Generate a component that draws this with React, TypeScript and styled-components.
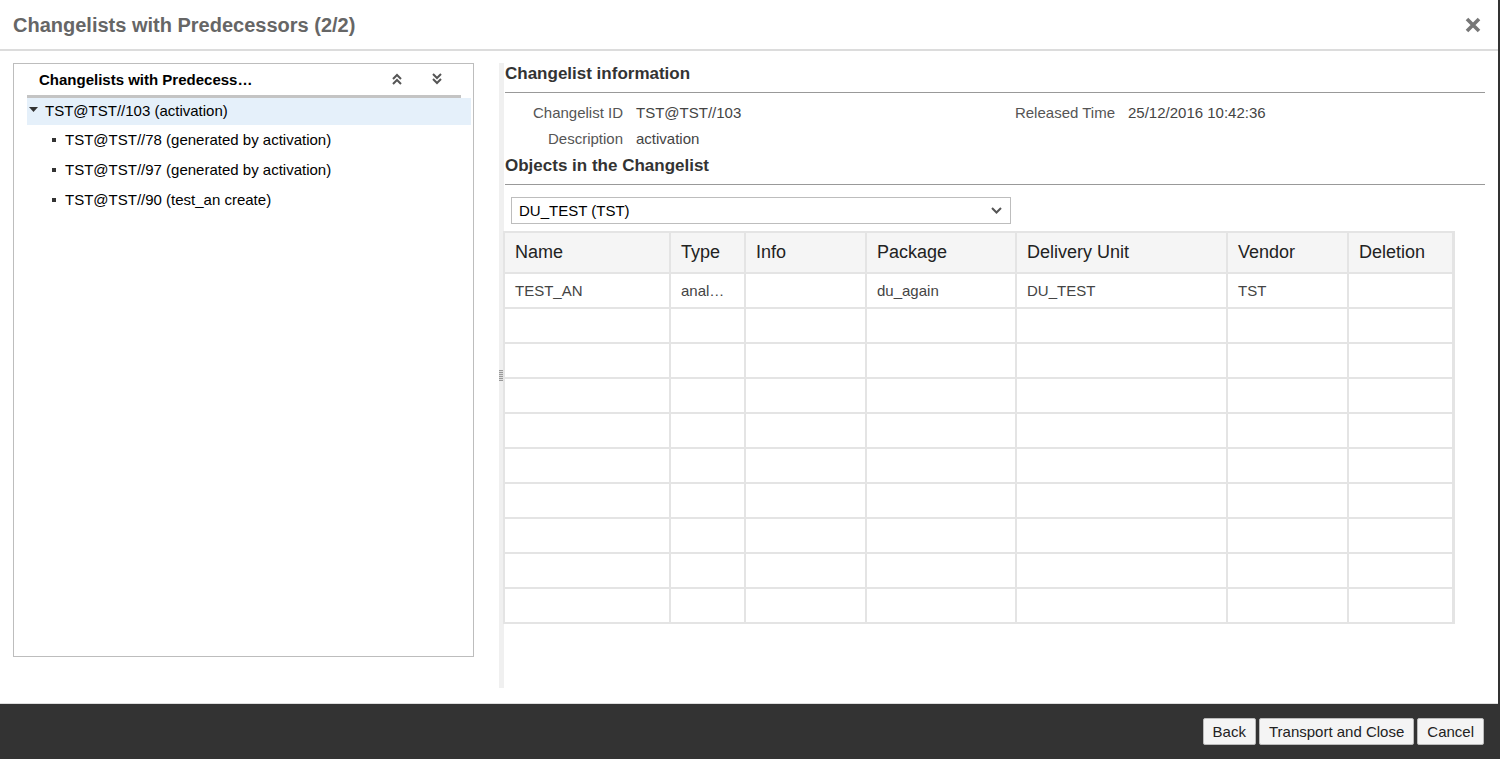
import React from "react";
import styled, { createGlobalStyle } from "styled-components";

const Global = createGlobalStyle`
  html, body { margin: 0; padding: 0; background: #fff; }
  body { font-family: "Liberation Sans", Arial, sans-serif; color: #333; }
  * { box-sizing: border-box; }
`;

const Dialog = styled.div`
  width: 1500px;
  height: 759px;
  display: flex;
  flex-direction: column;
  border-right: 2px solid #333;
  background: #fff;
`;

const Header = styled.div`
  height: 51px;
  flex: none;
  display: flex;
  align-items: center;
  justify-content: space-between;
  padding: 1px 16px 0 13px;
  border-bottom: 2px solid #dcdcdc;
`;

const Title = styled.h1`
  margin: 0;
  font-size: 20px;
  font-weight: bold;
  color: #666;
`;

const Close = styled.div`
  width: 18px;
  height: 18px;
  display: flex;
  align-items: center;
  justify-content: center;
`;

const Body = styled.div`
  flex: 1;
  display: flex;
  padding: 12px 13px 15px 13px;
  min-height: 0;
`;

const LeftPanel = styled.div`
  width: 461px;
  height: 594px;
  border: 1px solid #bdbdbd;
  padding: 0 2px 0 13px;
  flex: none;
`;

const TreeHead = styled.div`
  height: 34px;
  display: flex;
  align-items: center;
  padding: 0 16px 1px 12px;
  border-bottom: 3px solid #c4c4c4;
  margin-right: 10px;
`;

const TreeTitle = styled.div`
  flex: 1;
  font-size: 15px;
  font-weight: bold;
  color: #000;
`;

const IconBtn = styled.div`
  width: 16px;
  height: 16px;
  margin-left: 24px;
  display: flex;
  align-items: center;
  justify-content: center;
`;

const Row = styled.div<{ $selected?: boolean; $level: number }>`
  height: ${(p) => (p.$selected ? 27 : 30)}px;
  display: flex;
  align-items: center;
  padding-left: ${(p) => (p.$level === 0 ? 2 : 23)}px;
  background: ${(p) => (p.$selected ? "#e5f0fa" : "transparent")};
  font-size: 15px;
  color: #000;
  padding-bottom: ${(p) => (p.$selected ? 3 : 1)}px;
`;

const Twisty = styled.span`
  width: 16px;
  display: flex;
  align-items: center;
`;

const Bullet = styled.span`
  width: 4px;
  height: 4px;
  background: #333;
  margin: 0 9px 0 2px;
`;

const Splitter = styled.div`
  width: 5px;
  height: 625px;
  margin-left: 25px;
  background: #f0f0f0;
  flex: none;
  display: flex;
  align-items: center;
  justify-content: center;
`;

const Grip = styled.div`
  width: 5px;
  height: 11px;
  background: repeating-linear-gradient(#999 0 1px, #ddd 1px 2px);
`;

const RightPanel = styled.div`
  flex: 1;
  padding-left: 1px;
  display: flex;
  flex-direction: column;
`;

const SectionTitle = styled.h2`
  margin: 0;
  font-size: 17px;
  font-weight: bold;
  color: #333;
  height: 30px;
  line-height: 22px;
  border-bottom: 1px solid #999;
`;

const InfoGrid = styled.div`
  display: grid;
  grid-template-columns: 118px 354px 112px 1fr;
  grid-auto-rows: 26px;
  align-items: center;
  column-gap: 13px;
  padding: 6px 0 4px;
  font-size: 15px;
`;

const Label = styled.div`
  text-align: right;
  color: #555;
`;

const Value = styled.div`
  color: #444;
`;

const SelectBox = styled.div`
  margin: 12px 0 7px 6px;
  width: 500px;
  height: 27px;
  border: 1px solid #bdbdbd;
  display: flex;
  align-items: center;
  justify-content: space-between;
  padding: 0 8px 0 7px;
  font-size: 15px;
  color: #000;
`;

const TableWrap = styled.div`
  width: 952px;
  margin-left: -2px;
  border-right: 3px solid #e4e4e4;
`;

const Table = styled.table`
  border-collapse: collapse;
  table-layout: fixed;
  width: 949px;
  font-size: 15px;
`;

const Th = styled.th<{ $w: number }>`
  width: ${(p) => p.$w}px;
  height: 41px;
  background: #f5f5f5;
  border: 2px solid #e4e4e4;
  text-align: left;
  font-weight: normal;
  font-size: 18px;
  color: #222;
  padding: 0 10px 1px;
`;

const Td = styled.td`
  height: 35px;
  border: 2px solid #e4e4e4;
  padding: 0 16px 1px 10px;
  color: #444;
  white-space: nowrap;
  overflow: hidden;
  text-overflow: ellipsis;
`;

const Footer = styled.div`
  height: 56px;
  flex: none;
  background: #333;
  border-top: 1px solid #ddd;
  display: flex;
  align-items: center;
  justify-content: flex-end;
  gap: 3px;
  padding: 0 14px 0 0;
`;

const Button = styled.button`
  height: 27px;
  padding: 0 9px;
  background: #f4f4f4;
  border: 1px solid #bbb;
  border-radius: 2px;
  font-family: "Liberation Sans", Arial, sans-serif;
  font-size: 15px;
  color: #222;
`;

const cols = [
  { name: "Name", w: 166 },
  { name: "Type", w: 75 },
  { name: "Info", w: 121 },
  { name: "Package", w: 150 },
  { name: "Delivery Unit", w: 211 },
  { name: "Vendor", w: 121 },
  { name: "Deletion", w: 105 },
];

const data = [["TEST_AN", "analyticview", "", "du_again", "DU_TEST", "TST", ""]];

const DoubleChevron = ({ up }: { up?: boolean }) => (
  <svg width="12" height="12" viewBox="0 0 12 12">
    <g fill="none" stroke="#555" strokeWidth="2" transform={up ? "" : "rotate(180 6 6)"}>
      <polyline points="2,6 6,2 10,6" />
      <polyline points="2,11 6,7 10,11" />
    </g>
  </svg>
);

export default function App() {
  const rows = Array.from({ length: 10 }, (_, i) => data[i] || ["", "", "", "", "", "", ""]);
  return (
    <>
      <Global />
      <Dialog>
        <Header>
          <Title>Changelists with Predecessors (2/2)</Title>
          <Close>
            <svg width="16" height="16" viewBox="0 0 16 16">
              <path d="M2 2 L14 14 M14 2 L2 14" stroke="#777" strokeWidth="3.6" />
            </svg>
          </Close>
        </Header>
        <Body>
          <LeftPanel>
            <TreeHead>
              <TreeTitle>Changelists with Predecess…</TreeTitle>
              <IconBtn>
                <DoubleChevron up />
              </IconBtn>
              <IconBtn>
                <DoubleChevron />
              </IconBtn>
            </TreeHead>
            <Row $selected $level={0}>
              <Twisty>
                <svg width="10" height="6" viewBox="0 0 10 6">
                  <polygon points="0,0 9,0 4.5,5" fill="#333" />
                </svg>
              </Twisty>
              TST@TST//103 (activation)
            </Row>
            <Row $level={1}>
              <Bullet />
              TST@TST//78 (generated by activation)
            </Row>
            <Row $level={1}>
              <Bullet />
              TST@TST//97 (generated by activation)
            </Row>
            <Row $level={1}>
              <Bullet />
              TST@TST//90 (test_an create)
            </Row>
          </LeftPanel>
          <Splitter>
            <Grip />
          </Splitter>
          <RightPanel>
            <SectionTitle>Changelist information</SectionTitle>
            <InfoGrid>
              <Label>Changelist ID</Label>
              <Value>TST@TST//103</Value>
              <Label>Released Time</Label>
              <Value>25/12/2016 10:42:36</Value>
              <Label>Description</Label>
              <Value>activation</Value>
            </InfoGrid>
            <SectionTitle>Objects in the Changelist</SectionTitle>
            <SelectBox>
              DU_TEST (TST)
              <svg width="11" height="7" viewBox="0 0 11 7">
                <polyline points="1,1 5.5,5.5 10,1" fill="none" stroke="#555" strokeWidth="2" />
              </svg>
            </SelectBox>
            <TableWrap>
              <Table>
                <thead>
                  <tr>
                    {cols.map((c) => (
                      <Th key={c.name} $w={c.w}>
                        {c.name}
                      </Th>
                    ))}
                  </tr>
                </thead>
                <tbody>
                  {rows.map((r, i) => (
                    <tr key={i}>
                      {r.map((v, j) => (
                        <Td key={j}>{v}</Td>
                      ))}
                    </tr>
                  ))}
                </tbody>
              </Table>
            </TableWrap>
          </RightPanel>
        </Body>
        <Footer>
          <Button>Back</Button>
          <Button>Transport and Close</Button>
          <Button>Cancel</Button>
        </Footer>
      </Dialog>
    </>
  );
}
